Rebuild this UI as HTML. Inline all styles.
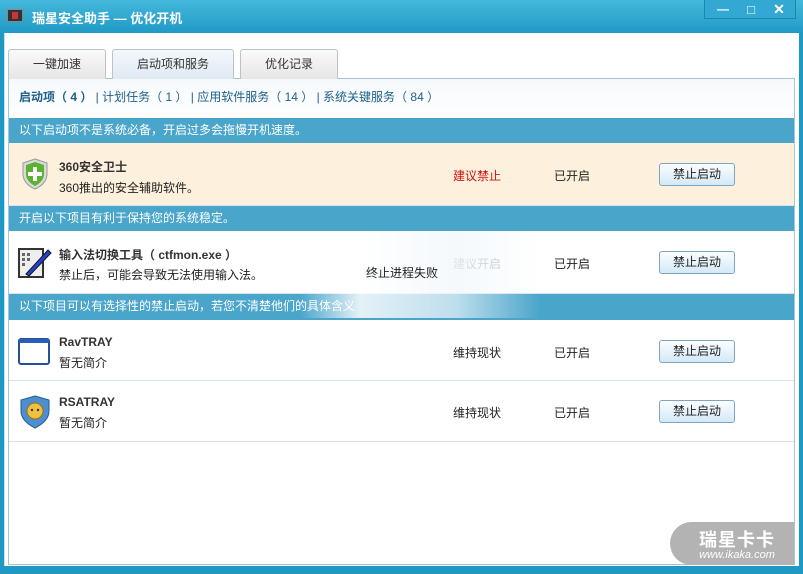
<!DOCTYPE html>
<html><head><meta charset="utf-8"><style>
*{margin:0;padding:0;box-sizing:border-box}
body{width:803px;height:574px;overflow:hidden;background:#1f98c4;font-family:"Liberation Sans","Noto Sans CJK SC",sans-serif;font-size:12px;color:#222;position:relative}
.title{position:absolute;left:0;top:0;width:803px;height:33px;background:linear-gradient(#45b8dc,#1f9ac6);}
.title .t{position:absolute;left:32px;top:8px;color:#fff;font-weight:bold;font-size:13px}
.ico{position:absolute;left:7px;top:9px;width:16px;height:13px;background:#333;border:1px solid #888}
.ico:after{content:"";position:absolute;left:4px;top:2px;width:6px;height:7px;background:#c33}
.btns{position:absolute;left:704px;top:0;width:92px;height:19px;background:#32a8d2;border:1px solid #1b86ad;border-top:0}
.btns span{position:absolute;top:0;height:19px;color:#fff;font-weight:bold;text-align:center;line-height:19px}
.client{position:absolute;left:4px;top:33px;width:795px;height:533px;background:#fff;border-left:1px solid #bfe4f0}
.tab{position:absolute;top:49px;height:30px;border:1px solid #b9c3c9;border-bottom:0;border-radius:3px 3px 0 0;background:linear-gradient(#fafafa,#e6e6e6);text-align:center;line-height:28px;font-size:12px;color:#333}
.tab.a{background:linear-gradient(#f3f8fc,#dfeaf3);height:30px;z-index:2}
.panel{position:absolute;left:8px;top:78px;width:787px;height:487px;border:1px solid #a8c4d2;background:linear-gradient(#f6f9fc 0,#fff 40px)}
.sub{position:absolute;left:19px;top:88px;font-size:12px;color:#1c5f8a}
.sub b{font-weight:bold}
.hd{position:absolute;left:9px;width:785px;height:25px;background:#4aa5cb;color:#fff;line-height:25px;padding-left:10px}
.row{position:absolute;left:9px;width:785px;border-bottom:1px solid #d7e3ea}
.row .n{position:absolute;left:50px;font-weight:bold;color:#333}
.row .d{position:absolute;left:50px}
.st{position:absolute;left:444px}
.on{position:absolute;left:545px}
.bt{position:absolute;left:650px;width:76px;height:23px;border:1px solid #7ea6c0;border-radius:3px;background:linear-gradient(#fbfdff,#d3e9f7);text-align:center;line-height:21px}
.wm{position:absolute;left:670px;top:522px;width:124px;height:43px;background:#b3b3b3;border-radius:22px 0 0 22px;color:#fff;text-align:center}
</style></head><body>
<div class="title"><div class="ico"></div><div class="t">瑞星安全助手 — 优化开机</div>
<div class="btns"><span style="left:8px;width:20px">—</span><span style="left:36px;width:20px;font-size:13px">□</span><span style="left:62px;width:24px;font-size:14px">✕</span></div></div>
<div class="client"></div>
<div class="panel"></div>
<div class="tab" style="left:8px;width:98px">一键加速</div>
<div class="tab a" style="left:112px;width:122px">启动项和服务</div>
<div class="tab" style="left:240px;width:98px">优化记录</div>
<div class="sub"><b>启动项（ 4 ）</b> | 计划任务（ 1 ） | 应用软件服务（ 14 ） | 系统关键服务（ 84 ）</div>

<div class="hd" style="top:118px">以下启动项不是系统必备，开启过多会拖慢开机速度。</div>
<div class="row" style="top:143px;height:63px;background:#fdf0dc">
<svg style="position:absolute;left:13px;top:15px" width="26" height="32" viewBox="0 0 26 32"><path d="M13 1L25 5V16C25 24 18 29 13 31C8 29 1 24 1 16V5Z" fill="#d8dcd8" stroke="#999"/><path d="M13 4L22 7V16C22 22 17 26 13 28C9 26 4 22 4 16V7Z" fill="#5cb130"/><path d="M11 9h4v5h5v4h-5v5h-4v-5H6v-4h5z" fill="#fff"/></svg>
<div class="n" style="top:15px">360安全卫士</div><div class="d" style="top:36px">360推出的安全辅助软件。</div>
<div class="st" style="top:24px;color:#d01010">建议禁止</div><div class="on" style="top:24px">已开启</div><div class="bt" style="top:20px">禁止启动</div></div>

<div class="hd" style="top:206px">开启以下项目有利于保持您的系统稳定。</div>
<div class="row" style="top:231px;height:63px">
<svg style="position:absolute;left:9px;top:15px" width="34" height="34" viewBox="0 0 34 34"><rect x="1" y="3" width="24" height="28" fill="#eee" stroke="#333" stroke-width="2"/><g fill="#666"><rect x="4" y="7" width="3" height="3"/><rect x="9" y="7" width="3" height="3"/><rect x="4" y="12" width="3" height="3"/><rect x="9" y="12" width="3" height="3"/><rect x="4" y="17" width="3" height="3"/></g><path d="M8 28L30 4L33 7L11 30Z" fill="#2244cc" stroke="#112"/></svg>
<div class="n" style="top:15px">输入法切换工具（ ctfmon.exe ）</div><div class="d" style="top:35px">禁止后，可能会导致无法使用输入法。</div>
<div class="st" style="top:24px;color:#bbb">建议开启</div><div class="on" style="top:24px">已开启</div><div class="bt" style="top:20px">禁止启动</div></div>

<div class="hd" style="top:294px;height:26px">以下项目可以有选择性的禁止启动，若您不清楚他们的具体含义</div>
<div style="position:absolute;left:300px;top:232px;width:240px;height:86px;background:linear-gradient(90deg,rgba(255,255,255,0) 0%,rgba(255,255,255,.85) 25%,rgba(240,246,251,.7) 65%,rgba(255,255,255,0) 100%)"></div>
<div style="position:absolute;left:366px;top:264px">终止进程失败</div>

<div class="row" style="top:320px;height:61px">
<svg style="position:absolute;left:9px;top:18px" width="32" height="28" viewBox="0 0 32 28"><rect x="1" y="1" width="30" height="25" rx="2" fill="#fff" stroke="#2a4f9a" stroke-width="2"/><rect x="1" y="1" width="30" height="4" fill="#2a5fb8"/></svg>
<div class="n" style="top:15px">RavTRAY</div><div class="d" style="top:34px">暂无简介</div>
<div class="st" style="top:24px">维持现状</div><div class="on" style="top:24px">已开启</div><div class="bt" style="top:20px">禁止启动</div></div>
<div class="row" style="top:381px;height:61px">
<svg style="position:absolute;left:10px;top:14px" width="32" height="34" viewBox="0 0 32 34"><path d="M16 1L30 5V16C30 25 22 30 16 33C10 30 2 25 2 16V5Z" fill="#4b8fd0" stroke="#2a5a90"/><circle cx="16" cy="16" r="8" fill="#f0c040" stroke="#a07010"/><circle cx="13" cy="15" r="1.2" fill="#333"/><circle cx="19" cy="15" r="1.2" fill="#333"/></svg>
<div class="n" style="top:14px">RSATRAY</div><div class="d" style="top:33px">暂无简介</div>
<div class="st" style="top:23px">维持现状</div><div class="on" style="top:23px">已开启</div><div class="bt" style="top:19px">禁止启动</div></div>

<div class="wm"><div style="font-size:18px;font-weight:bold;margin-top:4px;letter-spacing:1px;padding-left:10px">瑞星卡卡</div><div style="font-size:11px;font-style:italic;margin-top:-3px;padding-left:10px">www.ikaka.com</div></div>
</body></html>
